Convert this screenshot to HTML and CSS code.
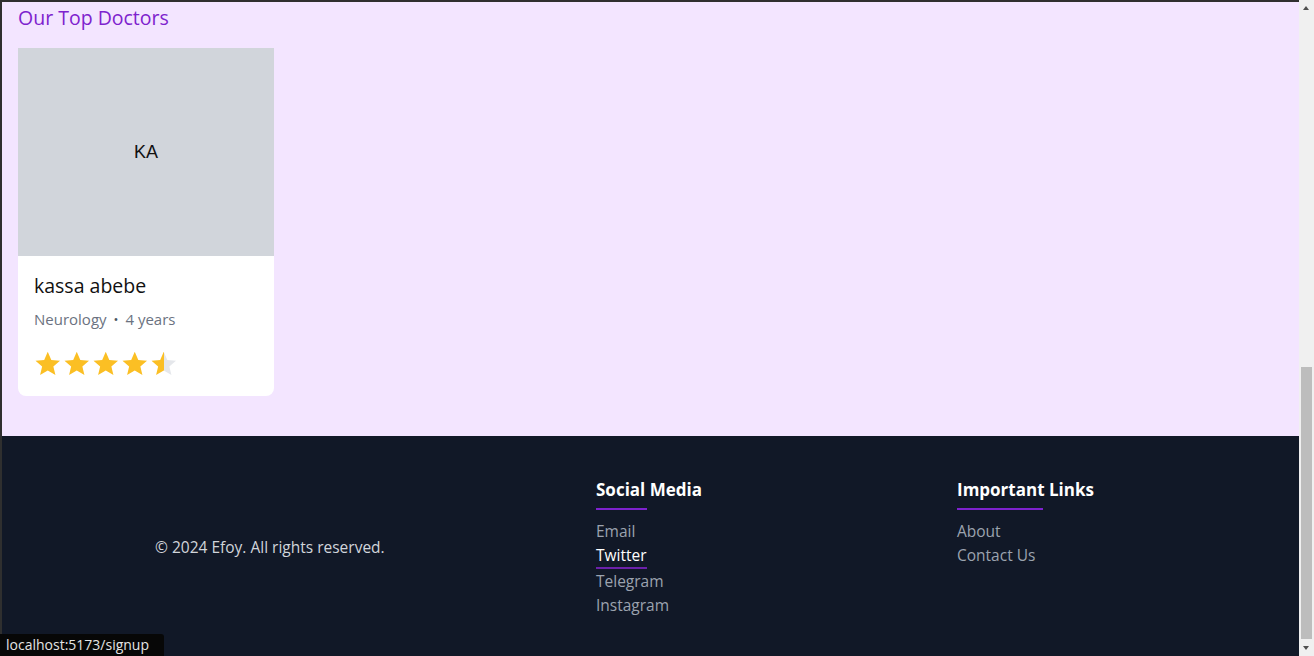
FILE: index.html
```html
<!DOCTYPE html>
<html lang="en">
<head>
<meta charset="utf-8">
<title>Efoy</title>
<link rel="stylesheet" href="styles.css">
</head>
<body>
<div class="window">
  <div class="viewport">
    <section class="doctors">
      <h2 class="doctors-title">Our Top Doctors</h2>
      <div class="doctor-grid">
        <article class="doctor-card">
          <div class="doctor-photo">KA</div>
          <div class="doctor-body">
            <h3 class="doctor-name">kassa abebe</h3>
            <p class="doctor-meta"><span>Neurology</span><span class="dot">•</span><span>4 years</span></p>
            <div class="stars">
              <svg class="star" viewBox="0 0 24 24"><path fill="#fbbf24" d="M12 1.6l3.1 7.1 7.6.6-5.8 5 1.8 7.5L12 17.8l-6.7 4 1.8-7.5-5.8-5 7.6-.6z"/></svg>
              <svg class="star" viewBox="0 0 24 24"><path fill="#fbbf24" d="M12 1.6l3.1 7.1 7.6.6-5.8 5 1.8 7.5L12 17.8l-6.7 4 1.8-7.5-5.8-5 7.6-.6z"/></svg>
              <svg class="star" viewBox="0 0 24 24"><path fill="#fbbf24" d="M12 1.6l3.1 7.1 7.6.6-5.8 5 1.8 7.5L12 17.8l-6.7 4 1.8-7.5-5.8-5 7.6-.6z"/></svg>
              <svg class="star" viewBox="0 0 24 24"><path fill="#fbbf24" d="M12 1.6l3.1 7.1 7.6.6-5.8 5 1.8 7.5L12 17.8l-6.7 4 1.8-7.5-5.8-5 7.6-.6z"/></svg>
              <svg class="star" viewBox="0 0 24 24"><defs><linearGradient id="half"><stop offset="50%" stop-color="#fbbf24"/><stop offset="50%" stop-color="#e5e7eb"/></linearGradient></defs><path fill="url(#half)" d="M12 1.6l3.1 7.1 7.6.6-5.8 5 1.8 7.5L12 17.8l-6.7 4 1.8-7.5-5.8-5 7.6-.6z"/></svg>
            </div>
          </div>
        </article>
      </div>
    </section>
    <footer class="footer">
      <div class="footer-copy">© 2024 Efoy. All rights reserved.</div>
      <div class="footer-col">
        <h4 class="footer-heading">Social Media</h4>
        <div class="footer-rule rule-social"></div>
        <ul class="footer-links">
          <li><a class="footer-link">Email</a></li>
          <li><a class="footer-link active">Twitter</a></li>
          <li><a class="footer-link">Telegram</a></li>
          <li><a class="footer-link">Instagram</a></li>
        </ul>
      </div>
      <div class="footer-col">
        <h4 class="footer-heading">Important Links</h4>
        <div class="footer-rule rule-links"></div>
        <ul class="footer-links">
          <li><a class="footer-link">About</a></li>
          <li><a class="footer-link">Contact Us</a></li>
        </ul>
      </div>
    </footer>
  </div>
  <div class="scrollbar">
    <div class="arrow up"></div>
    <div class="track"><div class="thumb"></div></div>
    <div class="arrow down"></div>
  </div>
</div>
<div class="status">localhost:5173/signup</div>
</body>
</html>
```
FILE: styles.css
```css
* { box-sizing: border-box; }
html, body { margin: 0; padding: 0; height: 100%; overflow: hidden; }
body {
  font-family: "Open Sans", "Noto Sans", sans-serif;
  background: #2f2f2f;
}
.window {
  display: flex;
  height: 656px;
  padding-top: 2px;
  padding-left: 2px;
}
.viewport {
  flex: 1;
  display: flex;
  flex-direction: column;
  overflow: hidden;
}
.doctors {
  background: #f3e5ff;
  padding: 4px 16px 40px 16px;
}
.doctors-title {
  margin: 0 0 18px 0;
  font-size: 19.5px;
  font-weight: 400;
  line-height: 24px;
  color: #7e22ce;
}
.doctor-grid { display: flex; }
.doctor-card {
  width: 256px;
  background: #fff;
  border-radius: 0 0 8px 8px;
  overflow: hidden;
}
.doctor-photo {
  height: 208px;
  background: #d1d5db;
  display: flex;
  align-items: center;
  justify-content: center;
  font-family: "Liberation Sans", Arial, sans-serif;
  font-size: 18px;
  color: #111;
}
.doctor-body { padding: 17px 16px 18px 16px; }
.doctor-name {
  margin: 0;
  font-size: 19.5px;
  font-weight: 400;
  line-height: 26px;
  color: #111;
}
.doctor-meta {
  margin: 10px 0 0 0;
  font-size: 15px;
  line-height: 20px;
  color: #6b7280;
  display: flex;
  gap: 7px;
}
.doctor-meta .dot { color: #4b5563; font-size: 13px; }
.stars {
  display: flex;
  gap: 1.5px;
  margin-top: 21px;
}
.star { width: 27.5px; height: 27.5px; display: block; }
.footer {
  flex: 1;
  background: #111827;
  display: grid;
  grid-template-columns: 441px 361px auto;
  align-items: start;
  padding: 42px 0 0 153px;
  align-content: start;
}
.footer-copy {
  color: #d1d5db;
  font-size: 15.5px;
  align-self: center;
}
.footer-heading {
  margin: 0;
  font-size: 17px;
  font-weight: 700;
  line-height: 24px;
  color: #fff;
}
.footer-rule {
  height: 2px;
  background: #7e22ce;
  margin-top: 6px;
  margin-bottom: 9px;
}
.rule-social { width: 51px; }
.rule-links { width: 86px; }
.footer-links { list-style: none; margin: 0; padding: 0; }
.footer-link {
  display: inline-block;
  font-size: 15.5px;
  line-height: 24px;
  color: #9ca3af;
}
.footer-link.active {
  color: #fff;
  border-bottom: 2px solid #6b21a8;
}
.scrollbar {
  width: 15px;
  background: #f0f0f0;
  display: flex;
  flex-direction: column;
  margin-top: -2px;
}
.arrow { height: 15px; position: relative; }
.arrow.up::after, .arrow.down::after {
  content: "";
  position: absolute;
  left: 4px;
  border-left: 3.5px solid transparent;
  border-right: 3.5px solid transparent;
}
.arrow.up::after { top: 6px; border-bottom: 4px solid #505050; }
.arrow.down::after { top: 5px; border-top: 4px solid #505050; }
.track { flex: 1; position: relative; }
.thumb {
  position: absolute;
  left: 2px;
  right: 2px;
  top: 352px;
  bottom: 2px;
  background: #bdbdbd;
}
.status {
  position: fixed;
  left: 0;
  bottom: 0;
  height: 22px;
  width: 164px;
  padding: 0 0 0 6px;
  background: #070707;
  border-top-right-radius: 3px;
  color: #e4e4e4;
  font-family: "Open Sans", "Noto Sans", sans-serif;
  font-size: 14px;
  line-height: 22px;
}
```
